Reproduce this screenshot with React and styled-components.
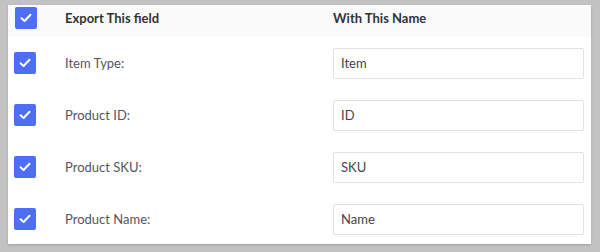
import React from "react";
import styled, { createGlobalStyle } from "styled-components";

const GlobalStyle = createGlobalStyle`
html, body {
margin: 0;
padding: 0;
background: #c2c2c2;
font-family: "Lato", "Liberation Sans", sans-serif;
}
`

const fields = [
    { label: "Item Type:", name: "Item" },
    { label: "Product ID:", name: "ID" },
    { label: "Product SKU:", name: "SKU" },
    { label: "Product Name:", name: "Name" },
];

const Check = () => (
    <Box>
        <svg width="12" height="10" viewBox="0 0 12 10">
            <path d="M1.5 5.2 L4.6 8 L10.5 1.8" fill="none" stroke="#fff" strokeWidth="2" strokeLinecap="round" strokeLinejoin="round" />
        </svg>
    </Box>
);

const App = () => {
    return (
        <Page>
            <GlobalStyle />
            <Panel>
                <Header>
                    <Check />
                    <HeadText>Export This field</HeadText>
                    <HeadText>With This Name</HeadText>
                </Header>
                {fields.map((f) => (
                    <Row key={f.label}>
                        <Check />
                        <Label>{f.label}</Label>
                        <Input type="text" defaultValue={f.name} />
                    </Row>
                ))}
            </Panel>
        </Page>
    )
}

const Page = styled.div`
padding: 5px 9px 8px 8px;
`

const Panel = styled.div`
background: #ffffff;
height: 239px;
box-sizing: border-box;
box-shadow: 0 1px 2px rgba(0, 0, 0, 0.18);
`

// 체크박스 | 라벨 | 인풋
const Header = styled.div`
display: grid;
grid-template-columns: 22px 240px 251px;
column-gap: 28px;
align-items: center;
padding: 2px 0 8px 7px;
background: #fafafa;
`

const Row = styled.div`
display: grid;
grid-template-columns: 22px 239px 251px;
column-gap: 29px;
align-items: center;
height: 52px;
padding-left: 6px;
`

const Box = styled.div`
width: 22px;
height: 22px;
border-radius: 2px;
background: #4d6ef5;
display: flex;
align-items: center;
justify-content: center;
`

const HeadText = styled.span`
font-size: 13px;
font-weight: bold;
color: #333333;
`

const Label = styled.span`
font-size: 13px;
color: #55565c;
`

const Input = styled.input`
box-sizing: border-box;
width: 251px;
height: 31px;
padding: 0 7px;
border: 1px solid #e2e2e2;
border-radius: 2px;
font-family: "Lato", "Liberation Sans", sans-serif;
font-size: 13px;
color: #44454a;
outline: none;
`

export default App;
